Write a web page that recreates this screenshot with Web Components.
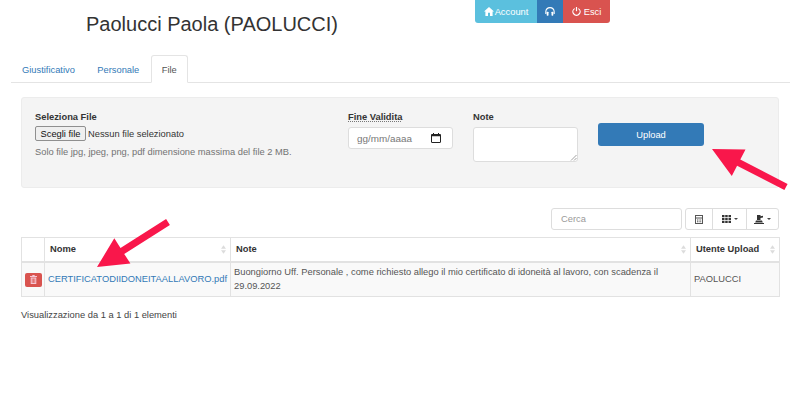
<!DOCTYPE html>
<html lang="it">
<head>
<meta charset="utf-8">
<title>File</title>
<style>
  html, body { margin: 0; background: #fff; }
  body { font-family: "Liberation Sans", Arial, sans-serif; font-size: 9.33px; color: #333; width: 800px; height: 404px; overflow: hidden; position: relative; }
</style>
</head>
<body>
<user-header name="Paolucci Paola (PAOLUCCI)"></user-header>
<tab-bar>
  <tab-link>Giustificativo</tab-link>
  <tab-link>Personale</tab-link>
  <tab-link active>File</tab-link>
</tab-bar>
<upload-panel></upload-panel>
<table-toolbar></table-toolbar>
<file-table></file-table>
<red-arrow tip="712,149" tail="786,187"></red-arrow>
<red-arrow tip="97,267" tail="168,222"></red-arrow>

<script>
class UserHeader extends HTMLElement {
  constructor() {
    super();
    this.attachShadow({ mode: "open" });
    this.shadowRoot.innerHTML = `
      <style>
        :host { display: grid; grid-template-columns: 475px auto; height: 55px; }
        h1 { margin: 13px 0 0 86px; font-size: 20px; line-height: 23px; font-weight: 400; color: #333; white-space: nowrap; }
        .group { display: flex; height: 23px; align-self: start; color: #fff; font-size: 9.33px; }
        .group div { display: flex; align-items: center; justify-content: center; }
        .account { width: 62px; gap: 1px; background: #5bc0de; border-radius: 0 0 0 3px; }
        .support { width: 26px; background: #337ab7; }
        .exit { width: 47px; gap: 3px; background: #d9534f; border-radius: 0 0 3px 0; }
        svg { display: block; fill: currentColor; }
      </style>
      <h1></h1>
      <div class="group">
        <div class="account">
          <svg width="10" height="9" viewBox="0 0 10 9"><path d="M5 0 10 4.500H8.600V9H6V5.800H4V9H1.400V4.500H0z"/></svg>
          <span>Account</span>
        </div>
        <div class="support">
          <svg width="10" height="9" viewBox="0 0 10 9"><path d="M5 0C2.200 0 .3 1.900 .3 4.500V7h1.100V4.500C1.400 2.500 3 1.200 5 1.200s3.600 1.300 3.600 3.300V7h1.100V4.500C9.700 1.900 7.800 0 5 0z"/><rect x="1.700" y="4.700" width="1.800" height="4" rx=".6"/><rect x="6.500" y="4.700" width="1.800" height="4" rx=".6"/></svg>
        </div>
        <div class="exit">
          <svg width="9" height="9" viewBox="0 0 9 9"><path d="M3.900 0h1.200v4.200H3.900z"/><path d="M2.700 .9v1.300a3 3 0 1 0 3.600 0V.9a4.200 4.200 0 1 1-3.600 0z"/></svg>
          <span>Esci</span>
        </div>
      </div>`;
    this.shadowRoot.querySelector("h1").textContent = this.getAttribute("name");
  }
}

class TabBar extends HTMLElement {
  constructor() {
    super();
    this.attachShadow({ mode: "open" });
    this.shadowRoot.innerHTML = `
      <style>
        :host { display: flex; gap: .4px; height: 27px; margin: 0 10px 0 11px; border-bottom: 1px solid #e4e4e4; }
      </style>
      <slot></slot>`;
  }
}

class TabLink extends HTMLElement {
  constructor() {
    super();
    this.attachShadow({ mode: "open" });
    this.shadowRoot.innerHTML = `
      <style>
        :host { display: block; height: 28px; box-sizing: border-box; padding: 7px 10px 0; line-height: 14px; font-size: 9.33px; color: #337ab7; border: 1px solid transparent; border-radius: 3px 3px 0 0; }
        :host([active]) { color: #555; background: #fff; border-color: #e4e4e4 #e4e4e4 #fff; }
      </style>
      <slot></slot>`;
  }
}

class UploadPanel extends HTMLElement {
  constructor() {
    super();
    this.attachShadow({ mode: "open" });
    this.shadowRoot.innerHTML = `
      <style>
        :host { display: grid; grid-template-columns: 313px 125px 125px auto; box-sizing: border-box; height: 91px; margin: 14px 21px 0; padding: 13px 13px 0; background: #f4f4f4; border: 1px solid #ececec; border-radius: 3px; font-size: 9.33px; }
        label { display: block; font-weight: 700; line-height: 12px; margin-bottom: 4px; color: #333; }
        .dotted { text-decoration: underline dotted #777; text-underline-offset: 1px; }
        .file { display: flex; align-items: center; height: 15px; margin-top: -1px; color: #333; }
        .file button { box-sizing: border-box; width: 51px; height: 15px; margin: 0 2px 0 0; padding: 0; border: 1px solid #8f8f8f; border-radius: 2px; background: #efefef; font: 9.33px "Liberation Sans", Arial, sans-serif; color: #111; }
        .help { margin-top: 5px; line-height: 13px; color: #737373; }
        .date { display: flex; align-items: center; justify-content: space-between; box-sizing: border-box; width: 105px; height: 22px; padding: 0 11px 0 8px; background: #fff; border: 1px solid #ddd; border-radius: 3px; color: #777; font-size: 9.9px; }
        .date svg { display: block; }
        .area { position: relative; box-sizing: border-box; width: 105px; height: 35px; background: #fff; border: 1px solid #ddd; border-radius: 3px; }
        .area svg { position: absolute; right: 0; bottom: 0; }
        .send { align-self: start; display: flex; align-items: center; justify-content: center; box-sizing: border-box; width: 106px; height: 23px; margin-top: 12px; background: #337ab7; border-radius: 3px; color: #fff; font-size: 9.33px; }
      </style>
      <div>
        <label>Seleziona File</label>
        <div class="file"><button>Scegli file</button><span>Nessun file selezionato</span></div>
        <div class="help">Solo file jpg, jpeg, png, pdf dimensione massima del file 2 MB.</div>
      </div>
      <div>
        <label><span class="dotted">Fine Validita</span></label>
        <div class="date">
          <span>gg/mm/aaaa</span>
          <svg width="10" height="10" viewBox="0 0 10 10"><path fill="#222" fill-rule="evenodd" d="M2 0h1v1h4V0h1v1h.8C9.500 1 10 1.500 10 2.200v6.600C10 9.500 9.500 10 8.800 10H1.200C.5 10 0 9.500 0 8.800V2.200C0 1.500 .5 1 1.200 1H2zM1 3.200V9h8V3.200z"/></svg>
        </div>
      </div>
      <div>
        <label>Note</label>
        <div class="area"><svg width="7" height="7" viewBox="0 0 7 7"><path d="M1 6.500 6.500 1M4 6.500 6.500 4" stroke="#888" stroke-width=".8"/></svg></div>
      </div>
      <div class="send">Upload</div>`;
  }
}

class TableToolbar extends HTMLElement {
  constructor() {
    super();
    this.attachShadow({ mode: "open" });
    this.shadowRoot.innerHTML = `
      <style>
        :host { display: flex; justify-content: flex-end; gap: 3px; height: 22px; margin: 20px 21px 7px 21px; font-size: 9.33px; }
        .search { box-sizing: border-box; width: 131px; height: 22px; padding: 0 9px; line-height: 20px; background: #fff; border: 1px solid #ddd; border-radius: 3px; color: #999; }
        .btns { display: flex; height: 22px; border: 1px solid #ddd; border-radius: 3px; box-sizing: border-box; }
        .btns div { display: flex; align-items: center; justify-content: center; gap: 3px; height: 20px; box-sizing: border-box; }
        .btns div + div { border-left: 1px solid #ddd; }
        .b1 { width: 26px; } .b2 { width: 34px; } .b3 { width: 32px; }
        svg { display: block; fill: #333; }
        .caret { width: 0; height: 0; border: 2px solid transparent; border-top-color: #444; border-bottom: 0; }
      </style>
      <div class="search">Cerca</div>
      <div class="btns">
        <div class="b1"><svg width="8" height="9" viewBox="0 0 8 9"><path fill="#555" fill-rule="evenodd" d="M0 0h8v9H0zM1 1v1.500h6V1zM1 3.500V8h6V3.500z"/><path fill="#555" d="M2 4.500h1v1H2zM3.600 4.500h1v1h-1zM5.200 4.500h1v1h-1zM2 6.200h1v1H2zM3.600 6.200h1v1h-1zM5.200 6.200h1v1h-1z"/></svg></div>
        <div class="b2"><svg width="9" height="8" viewBox="0 0 9 8"><path d="M0 0h2.500v2.200H0zM3.200 0h2.500v2.200H3.200zM6.500 0H9v2.200H6.500zM0 2.900h2.500v2.200H0zM3.200 2.900h2.500v2.200H3.200zM6.500 2.900H9v2.200H6.500zM0 5.800h2.500V8H0zM3.200 5.800h2.500V8H3.200zM6.500 5.800H9V8H6.500z"/></svg><span class="caret"></span></div>
        <div class="b3"><svg width="10" height="9" viewBox="0 0 10 9"><path d="M3 0h3.500v1.200L9 .8v1.700L6.500 3v2H3zM2 5.500h6l.8 2H1.200zM0 8h10v1H0z"/></svg><span class="caret"></span></div>
      </div>`;
  }
}

class FileTable extends HTMLElement {
  constructor() {
    super();
    this.attachShadow({ mode: "open" });
    const sort = `<svg class="sort" width="5" height="9" viewBox="0 0 6 10"><path d="M3 0 6 4H0zM3 10 0 6h6z" fill="#dcdcdc"/></svg>`;
    this.shadowRoot.innerHTML = `
      <style>
        :host { display: block; margin: 0 21px; font-size: 9.33px; color: #333; }
        table { width: 758px; table-layout: fixed; border-collapse: collapse; border: 1px solid #e2e2e2; }
        th, td { border: 1px solid #e2e2e2; padding: 0 3px; line-height: 13.33px; text-align: left; }
        th { position: relative; height: 23px; font-weight: 700; border-bottom-width: 2px; padding-left: 5px; }
        td { height: 33px; background: #f9f9f9; color: #555; }
        a { color: #337ab7; white-space: nowrap; }
        .sort { position: absolute; right: 4px; top: 7px; }
        .trash { display: flex; align-items: center; justify-content: center; width: 17px; height: 14px; background: #d9534f; border-radius: 2px; }
        .trash svg { display: block; }
        .first { padding: 0 3px; }
        p { margin: 12px 0 0; line-height: 13px; color: #444; }
      </style>
      <table>
        <colgroup><col style="width:23px"><col style="width:186px"><col style="width:460px"><col style="width:89px"></colgroup>
        <tr><th></th><th>Nome${sort}</th><th>Note${sort}</th><th>Utente Upload${sort}</th></tr>
        <tr>
          <td class="first"><div class="trash"><svg width="7" height="9" viewBox="0 0 7 9"><path fill="#f6c6d4" fill-rule="evenodd" d="M2.500 0h2l.4 1H7v1H0V1h2.100zM.7 2.600h5.600V9H.7zM1.800 3.500v4.500h.7V3.500zM3.200 3.500v4.500h.7V3.500zM4.500 3.500v4.500h.7V3.500z"/></svg></div></td>
          <td><a>CERTIFICATODIIDONEITAALLAVORO.pdf</a></td>
          <td>Buongiorno Uff. Personale , come richiesto allego il mio certificato di idoneità al lavoro, con scadenza il 29.09.2022</td>
          <td>PAOLUCCI</td>
        </tr>
      </table>
      <p>Visualizzazione da 1 a 1 di 1 elementi</p>`;
  }
}

// freccia rossa disegnata sopra la pagina
class RedArrow extends HTMLElement {
  constructor() {
    super();
    this.attachShadow({ mode: "open" });
    const [tx, ty] = this.getAttribute("tip").split(",").map(Number);
    const [ex, ey] = this.getAttribute("tail").split(",").map(Number);
    const len = Math.hypot(ex - tx, ey - ty);
    const ux = (ex - tx) / len, uy = (ey - ty) / len;
    const nx = -uy, ny = ux;
    const head = 30, headW = 15, w = 3.5;
    const bx = tx + ux * head, by = ty + uy * head;
    const pts = [
      [tx, ty],
      [bx + nx * headW, by + ny * headW],
      [bx + nx * w, by + ny * w],
      [ex + nx * w, ey + ny * w],
      [ex - nx * w, ey - ny * w],
      [bx - nx * w, by - ny * w],
      [bx - nx * headW, by - ny * headW]
    ].map(p => p.map(v => v.toFixed(1)).join(",")).join(" ");
    this.shadowRoot.innerHTML = `
      <style>
        :host { position: absolute; left: 0; top: 0; width: 800px; height: 404px; pointer-events: none; }
        svg { display: block; }
      </style>
      <svg width="800" height="404"><polygon points="${pts}" fill="#f9174b"/></svg>`;
  }
}

customElements.define("user-header", UserHeader);
customElements.define("tab-bar", TabBar);
customElements.define("tab-link", TabLink);
customElements.define("upload-panel", UploadPanel);
customElements.define("table-toolbar", TableToolbar);
customElements.define("file-table", FileTable);
customElements.define("red-arrow", RedArrow);
</script>
</body>
</html>
